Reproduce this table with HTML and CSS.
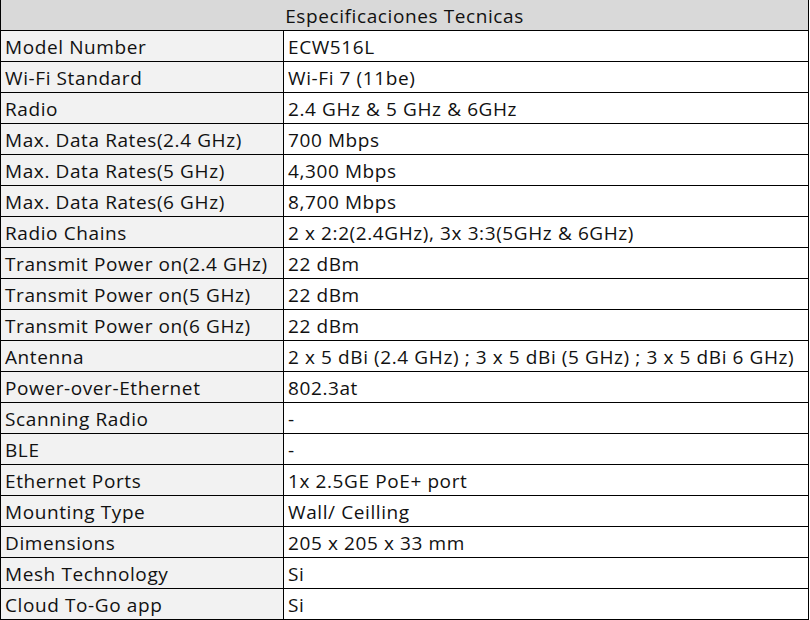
FILE: index.html
```html
<!DOCTYPE html>
<html>
<head>
<meta charset="utf-8">
<link rel="stylesheet" href="styles.css">
</head>
<body>
<table class="spec">
  <colgroup><col class="col-key"><col class="col-val"></colgroup>
  <thead>
    <tr><th class="title" colspan="2">Especificaciones Tecnicas</th></tr>
  </thead>
  <tbody>
    <tr><td class="key">Model Number</td><td class="val">ECW516L</td></tr>
    <tr><td class="key">Wi-Fi Standard</td><td class="val">Wi-Fi 7 (11be)</td></tr>
    <tr><td class="key">Radio</td><td class="val">2.4 GHz &amp; 5 GHz &amp; 6GHz</td></tr>
    <tr><td class="key">Max. Data Rates(2.4 GHz)</td><td class="val">700 Mbps</td></tr>
    <tr><td class="key">Max. Data Rates(5 GHz)</td><td class="val">4,300 Mbps</td></tr>
    <tr><td class="key">Max. Data Rates(6 GHz)</td><td class="val">8,700 Mbps</td></tr>
    <tr><td class="key">Radio Chains</td><td class="val">2 x 2:2(2.4GHz), 3x 3:3(5GHz &amp; 6GHz)</td></tr>
    <tr><td class="key">Transmit Power on(2.4 GHz)</td><td class="val">22 dBm</td></tr>
    <tr><td class="key">Transmit Power on(5 GHz)</td><td class="val">22 dBm</td></tr>
    <tr><td class="key">Transmit Power on(6 GHz)</td><td class="val">22 dBm</td></tr>
    <tr><td class="key">Antenna</td><td class="val">2 x 5 dBi (2.4 GHz) ; 3 x 5 dBi (5 GHz) ; 3 x 5 dBi 6 GHz)</td></tr>
    <tr><td class="key">Power-over-Ethernet</td><td class="val">802.3at</td></tr>
    <tr><td class="key">Scanning Radio</td><td class="val">-</td></tr>
    <tr><td class="key">BLE</td><td class="val">-</td></tr>
    <tr><td class="key">Ethernet Ports</td><td class="val">1x 2.5GE PoE+ port</td></tr>
    <tr><td class="key">Mounting Type</td><td class="val">Wall/ Ceilling</td></tr>
    <tr><td class="key">Dimensions</td><td class="val">205 x 205 x 33 mm</td></tr>
    <tr><td class="key">Mesh Technology</td><td class="val">Si</td></tr>
    <tr><td class="key">Cloud To-Go app</td><td class="val">Si</td></tr>
  </tbody>
</table>
</body>
</html>
```
FILE: styles.css
```css
html, body {
  margin: 0;
  padding: 0;
  background: #fff;
}
.spec {
  border-collapse: separate;
  border-spacing: 0;
  width: 809px;
  table-layout: fixed;
  font-family: "Open Sans", sans-serif;
  font-size: 19px;
  letter-spacing: 0.6px;
  color: #111;
}
.col-key { width: 284px; }
.col-val { width: 525px; }
.spec th, .spec td {
  box-sizing: border-box;
  padding: 2px 0 0 4px;
  height: 31px;
  line-height: 28px;
  font-weight: 400;
  text-align: left;
  white-space: nowrap;
  overflow: hidden;
  border-bottom: 1px solid #000;
  border-right: 1px solid #000;
  vertical-align: top;
}
.spec .title {
  background: #d9d9d9;
  text-align: center;
  padding: 2px 0 0 0;
  border-left: 1px solid #000;
}
.spec .key {
  background: #f2f2f2;
  border-left: 1px solid #000;
}
.spec .val {
  background: #fff;
}
```
